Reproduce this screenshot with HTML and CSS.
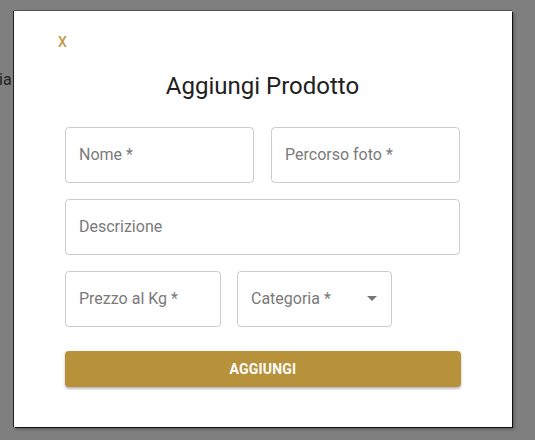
FILE: index.html
```html
<!DOCTYPE html>
<html lang="it">
<head>
<meta charset="utf-8">
<title>Aggiungi Prodotto</title>
<link rel="stylesheet" href="styles.css">
</head>
<body>
<div class="page">
  <span class="behind">ia</span>
</div>
<div class="overlay">
  <div class="dialog">
    <div class="close-row"><button class="close">x</button></div>
    <h2 class="title">Aggiungi Prodotto</h2>
    <form class="form">
      <div class="row">
        <div class="field half">Nome *</div>
        <div class="field half">Percorso foto *</div>
      </div>
      <div class="row">
        <div class="field full">Descrizione</div>
      </div>
      <div class="row tight">
        <div class="field price">Prezzo al Kg *</div>
        <div class="field select">Categoria *
          <svg class="arrow" viewBox="0 0 24 24" width="24" height="24"><path d="M7 10l5 5 5-5z"/></svg>
        </div>
      </div>
      <button type="button" class="submit">Aggiungi</button>
    </form>
  </div>
</div>
</body>
</html>
```
FILE: styles.css
```css
html, body {
  margin: 0;
  padding: 0;
}
body {
  width: 535px;
  height: 440px;
  background: #7f7f7f;
  font-family: Roboto, "Noto Sans", sans-serif;
  overflow: hidden;
  position: relative;
}
.page {
  padding-top: 70px;
}
.behind {
  display: block;
  margin-left: -1px;
  font-size: 16px;
  line-height: 20px;
  color: #1f1f1f;
}
.overlay {
  position: absolute;
  left: 14px;
  top: 11px;
}
.dialog {
  width: 498px;
  height: 416px;
  box-sizing: border-box;
  background: #fff;
  padding: 19px 52px 0 51px;
  box-shadow: -1px 0 0 rgba(0,0,0,0.75), 1px 1px 0 rgba(0,0,0,0.8), 0 -1px 0 rgba(0,0,0,0.35), 2px 2px 3px rgba(0,0,0,0.35);
}
.close-row {
  height: 24px;
  margin-left: -7px;
}
.close {
  border: 0;
  background: none;
  padding: 0;
  font-family: Roboto, sans-serif;
  font-size: 14px;
  font-weight: 500;
  line-height: 24px;
  text-transform: uppercase;
  color: #c09a4c;
  cursor: pointer;
}
.title {
  margin: 16px 0 0 0;
  font-size: 24px;
  font-weight: 400;
  line-height: 32px;
  text-align: center;
  color: #212121;
}
.form {
  margin-top: 25px;
  display: flex;
  flex-direction: column;
  gap: 16px;
}
.row {
  display: flex;
  gap: 17px;
}
.row.tight {
  gap: 16px;
}
.field {
  height: 56px;
  box-sizing: border-box;
  border: 1px solid rgba(0,0,0,0.2);
  border-radius: 4px;
  padding-left: 13px;
  padding-bottom: 2px;
  display: flex;
  align-items: center;
  font-size: 16px;
  color: #7a7a7a;
}
.half {
  width: 190px;
}
.full {
  width: 396px;
}
.price {
  width: 156px;
}
.select {
  width: 155px;
  position: relative;
}
.arrow {
  position: absolute;
  right: 7px;
  top: 14px;
  fill: #757575;
}
.submit {
  margin-top: 8px;
  width: 396px;
  height: 36px;
  border: 0;
  border-radius: 4px;
  background: #b8913b;
  color: #fff;
  font-family: Roboto, sans-serif;
  font-size: 14px;
  font-weight: 700;
  letter-spacing: 0.2px;
  text-transform: uppercase;
  box-shadow: 0 2px 2px rgba(0,0,0,0.2), 0 1px 4px rgba(0,0,0,0.12);
}
```
